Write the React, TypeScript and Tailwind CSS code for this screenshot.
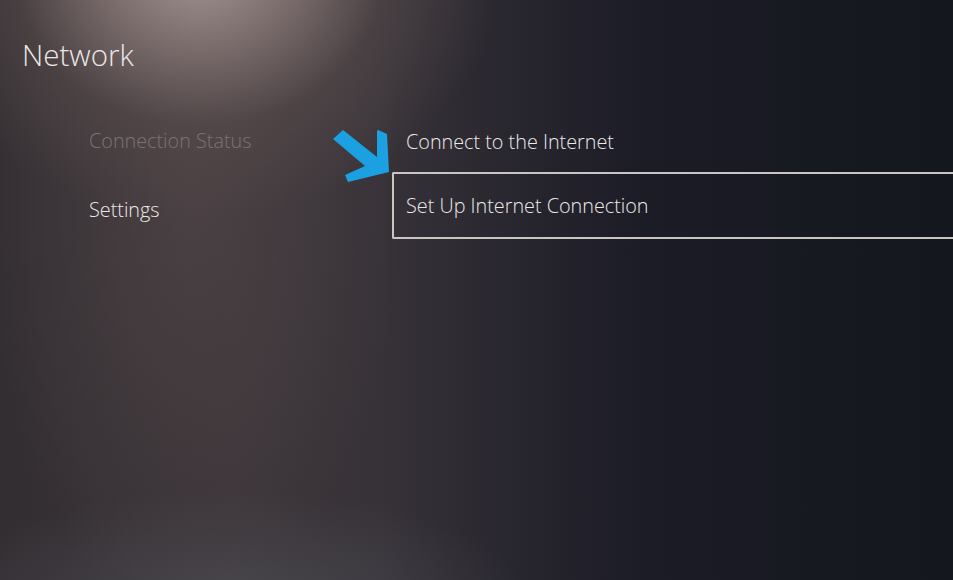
export default function App() {
  return (
    <div
      className="relative w-[953px] h-[580px] overflow-hidden text-[#ebe9e8] bg-[radial-gradient(ellipse_300px_250px_at_200px_-30px,#a39494_0%,#7c6e6d_30%,rgba(90,78,78,0.5)_62%,rgba(70,62,64,0)_100%),radial-gradient(ellipse_210px_420px_at_190px_200px,rgba(88,76,78,0.55)_0%,rgba(70,62,64,0)_100%),radial-gradient(ellipse_300px_110px_at_230px_600px,rgba(80,82,90,0.6)_0%,rgba(60,60,68,0)_100%),linear-gradient(90deg,#332e32_0%,#3b3438_25%,#373238_40%,#27252e_55%,#1c1c26_68%,#171921_85%,#15171f_100%)]"
      style={{ fontFamily: '"Open Sans", "Noto Sans", sans-serif' }}
    >
      <h1 className="pl-[22px] pt-[35px] text-[29.5px] leading-[40px] font-light">Network</h1>

      <div className="flex mt-[30px]">
        {/* left menu */}
        <div className="w-[392px] pl-[89px] flex flex-col">
          <div className="h-[70px] flex items-center pt-[1px] text-[19.8px] font-light text-[#7a7472]">Connection Status</div>
          <div className="h-[70px] flex items-center text-[19.8px] font-light">Settings</div>
        </div>

        {/* right options */}
        <div className="flex-1 flex flex-col">
          <div className="h-[67px] flex items-center pl-[14px] pt-[6px] text-[19.8px] font-light">Connect to the Internet</div>
          <div className="h-[67px] flex items-center pl-[12px] text-[19.8px] font-light border-2 border-r-0 border-[#c9c5c1] rounded-l-[2px]">
            Set Up Internet Connection
          </div>
        </div>
      </div>

      {/* annotation arrow */}
      <svg className="absolute left-0 top-0" width="953" height="580" viewBox="0 0 953 580">
        <polygon
          fill="#1ba1e2"
          points="343,130 377,157 377,131 378,130 387,134 389,172 348,182 345,175 365,166 333,139"
        />
      </svg>
    </div>
  );
}
